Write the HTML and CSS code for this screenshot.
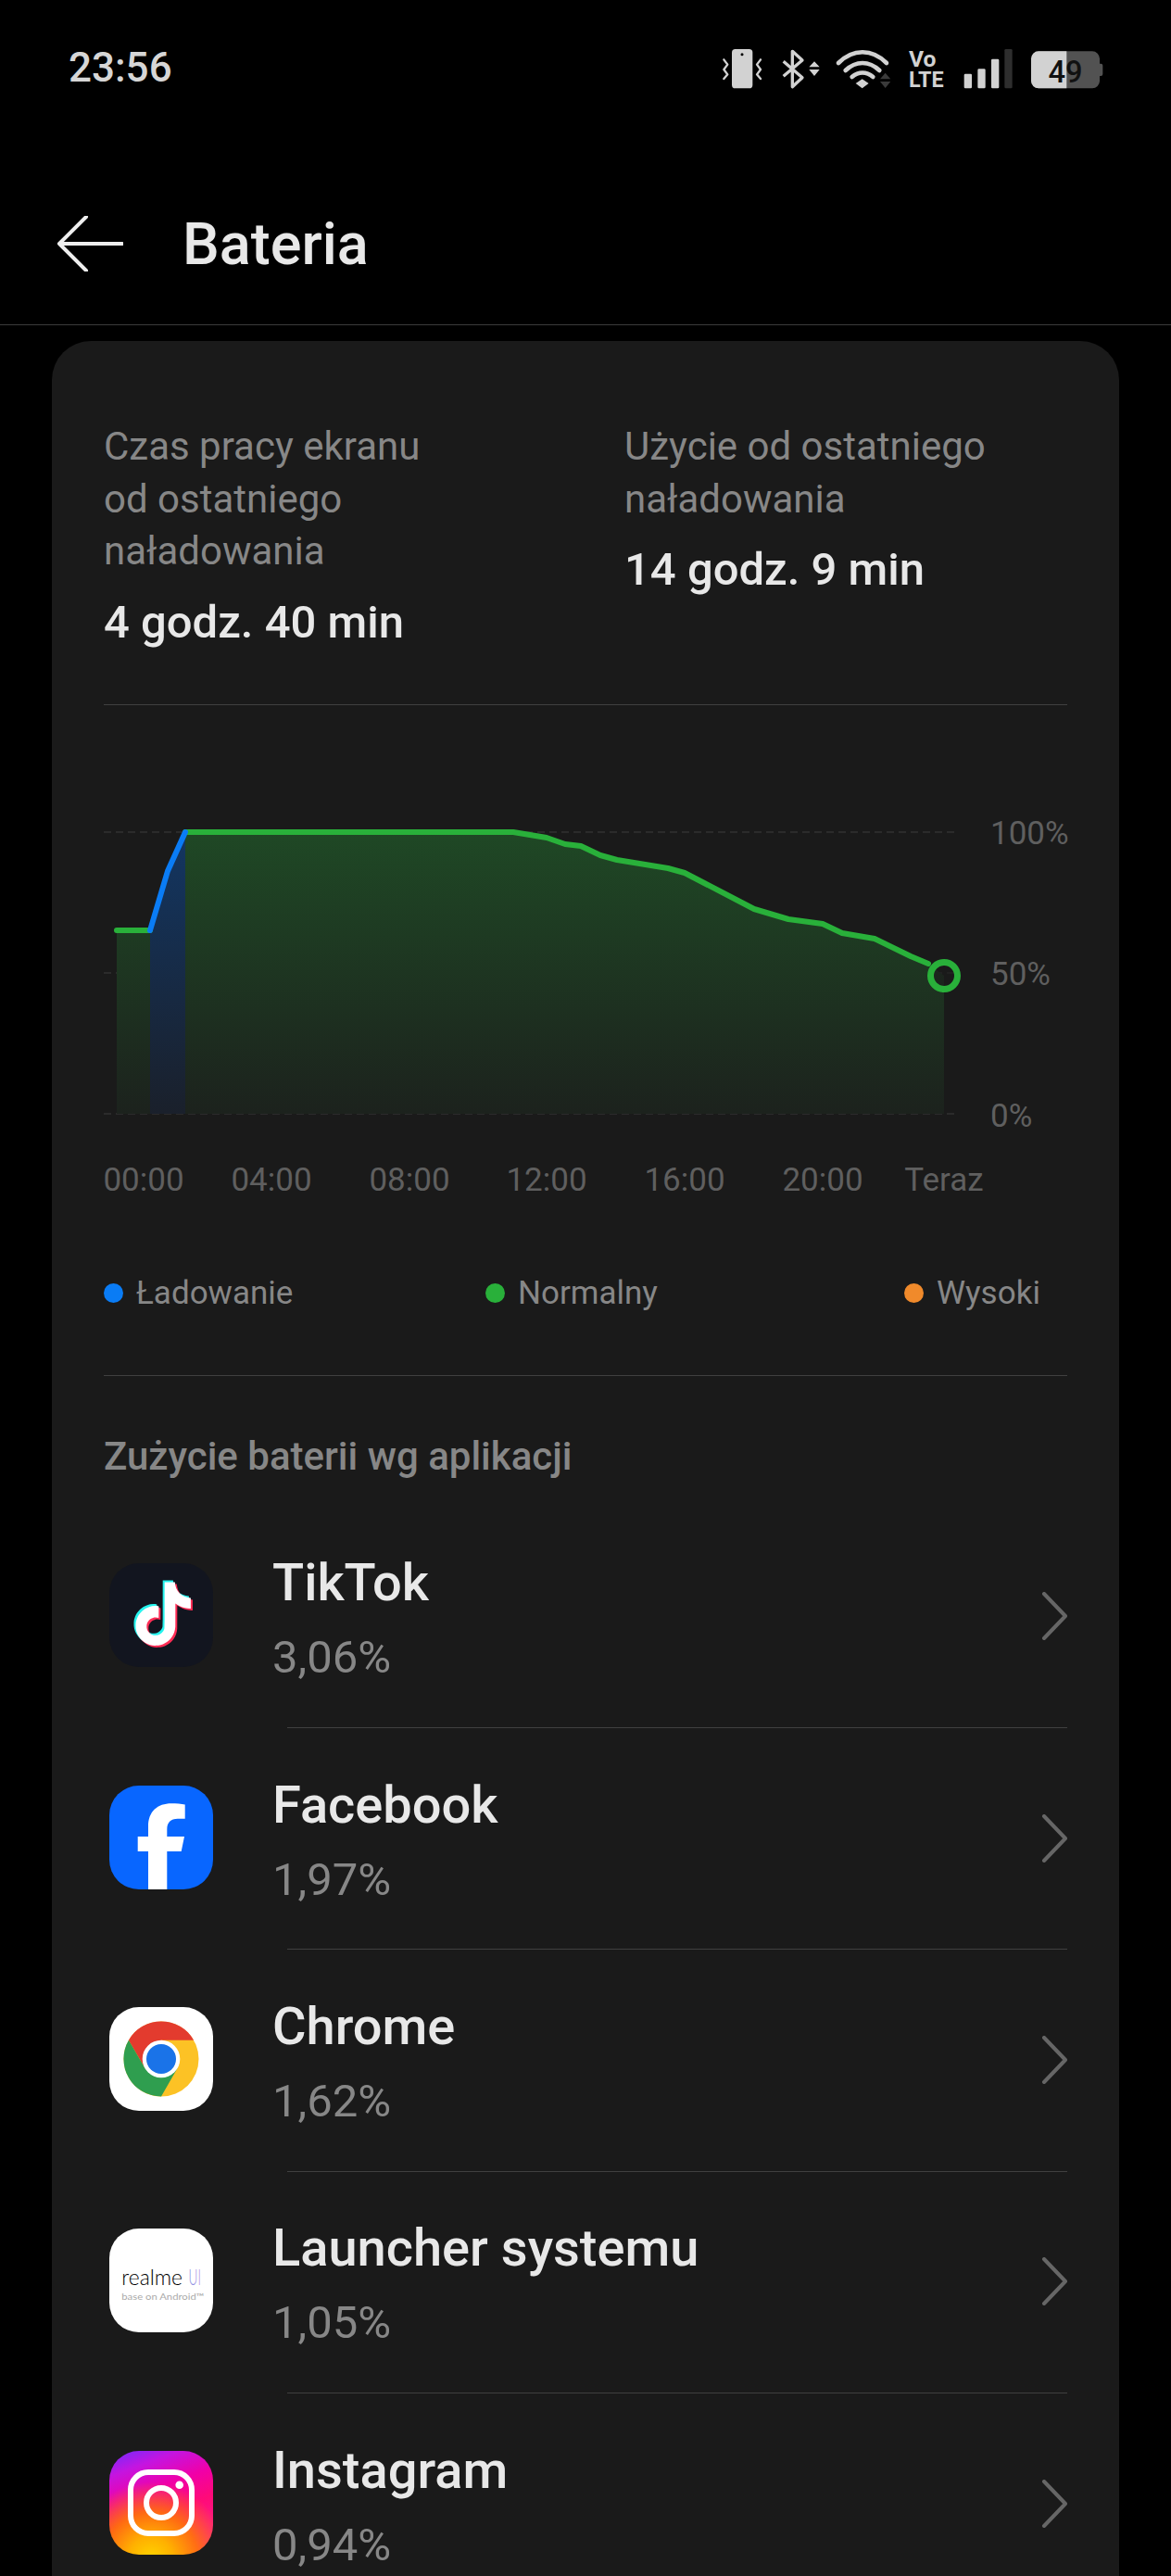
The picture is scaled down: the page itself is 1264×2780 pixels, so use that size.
FILE: index.html
```html
<!DOCTYPE html>
<html lang="pl">
<head>
<meta charset="utf-8">
<title>Bateria</title>
<link rel="stylesheet" href="styles.css">
</head>
<body>
<div class="screen">
  <div class="statusbar">
    <span class="time">23:56</span>
    <div class="status-icons">
      <svg class="si" width="44" height="45" viewBox="118 65 132 135"><rect x="148" y="68" width="67" height="127" rx="11" fill="#d2d2d2"/><circle cx="181" cy="85" r="4.5" fill="#000"/><path class="zig" d="M122 102L134 118 122 134 134 150 122 164M241 102L229 118 241 134 229 150 241 164"/></svg>
      <svg class="si" width="39" height="45" viewBox="310 65 117 135"><path class="bt" d="M315 108L376 160 344 190V75L376 104 315 156"/><path fill="#d2d2d2" d="M415 108L432 126H398ZM398 134H432L415 155Z"/></svg>
      <svg class="si" width="58.3" height="45" viewBox="487 65 175 135"><path class="wf" d="M493 113C540 66 602 66 649 113"/><path class="wf" d="M516 137C550 105 592 105 626 137"/><path class="wf" d="M537 158C558 140 584 140 605 158"/><path fill="#d2d2d2" d="M570 165L591 179 570 195 549 179Z"/><path fill="#3a3a3a" d="M645 145L662 165H628ZM628 173H662L645 194Z"/></svg>
      <svg class="si" width="39.3" height="45" viewBox="722 65 118 135"><text class="vo" x="722" y="125">Vo</text><text class="vo" x="722" y="192" textLength="113" lengthAdjust="spacingAndGlyphs">LTE</text></svg>
      <svg class="si" width="52.7" height="45" viewBox="900 65 158 135"><rect x="902" y="148" width="25" height="47" rx="4" fill="#d2d2d2"/><rect x="946" y="132" width="25" height="63" rx="4" fill="#d2d2d2"/><rect x="990" y="100" width="25" height="95" rx="4" fill="#d2d2d2"/><rect x="1033" y="68" width="25" height="127" rx="4" fill="#2e2e2e"/></svg>
      <svg class="si" width="78" height="45" viewBox="1118 65 234 135"><rect x="1118" y="75" width="222" height="120" rx="24" fill="#525252"/><path fill="#525252" d="M1340 115h4a6 6 0 0 1 6 6v28a6 6 0 0 1-6 6h-4z"/><path fill="#d2d2d2" d="M1233 75H1142a24 24 0 0 0-24 24v72a24 24 0 0 0 24 24h91z"/><text class="batt" x="1229" y="175" text-anchor="middle">49</text></svg>
    </div>
  </div>

  <header class="appbar">
    <svg class="back" width="72" height="60" viewBox="0 0 72 60"><path d="M32 1L3 30 32 59M3 30H71"/></svg>
    <h1 class="title">Bateria</h1>
  </header>

  <main class="card">
    <section class="stats">
      <div class="stat">
        <p class="stat-label">Czas pracy ekranu<br>od ostatniego<br>naładowania</p>
        <p class="stat-value">4 godz. 40 min</p>
      </div>
      <div class="stat">
        <p class="stat-label">Użycie od ostatniego<br>naładowania</p>
        <p class="stat-value">14 godz. 9 min</p>
      </div>
    </section>

    <svg class="chart" width="1152" height="450" viewBox="56 860 1152 450">
      <defs>
        <linearGradient id="gGreen" gradientUnits="userSpaceOnUse" x1="0" y1="898" x2="0" y2="1202"><stop offset="0" stop-color="#1f4825"/><stop offset="1" stop-color="#1c221d"/></linearGradient>
        <linearGradient id="gBlue" gradientUnits="userSpaceOnUse" x1="0" y1="898" x2="0" y2="1202"><stop offset="0" stop-color="#133662"/><stop offset="1" stop-color="#1a202b"/></linearGradient>
      </defs>
      <path class="grid" d="M112 898H1032M112 1050H1032M112 1202H1032"/>
      <path fill="url(#gGreen)" d="M126 1004H162V1202H126Z"/>
      <path fill="url(#gBlue)" d="M162 1004L181 940 200 898V1202H162Z"/>
      <path fill="url(#gGreen)" d="M200 898H554L590 904 610 911 627 913 648 923 666 928 721 937 739 942 814 981 851 992 888 997 909 1007 944 1013 983 1032 1002 1040 1019 1053V1202H200Z"/>
      <path class="line-green" d="M126 1004H162M200 898H554L590 904 610 911 627 913 648 923 666 928 721 937 739 942 814 981 851 992 888 997 909 1007 944 1013 983 1032 1002 1040"/>
      <path class="line-blue" d="M162 1004L181 940 200 898"/>
      <circle class="dot-end" cx="1019" cy="1053" r="14.5"/>
      <text class="axis" x="1069" y="911">100%</text>
      <text class="axis" x="1069" y="1063">50%</text>
      <text class="axis" x="1069" y="1216">0%</text>
      <text class="axis" x="155" y="1285" text-anchor="middle">00:00</text>
      <text class="axis" x="293" y="1285" text-anchor="middle">04:00</text>
      <text class="axis" x="442" y="1285" text-anchor="middle">08:00</text>
      <text class="axis" x="590" y="1285" text-anchor="middle">12:00</text>
      <text class="axis" x="739" y="1285" text-anchor="middle">16:00</text>
      <text class="axis" x="888" y="1285" text-anchor="middle">20:00</text>
      <text class="axis" x="1019" y="1285" text-anchor="middle">Teraz</text>
    </svg>

    <div class="legend">
      <span class="legend-item"><i class="ldot ldot-blue"></i>Ładowanie</span>
      <span class="legend-item"><i class="ldot ldot-green"></i>Normalny</span>
      <span class="legend-item"><i class="ldot ldot-orange"></i>Wysoki</span>
    </div>

    <section class="usage">
      <h2 class="usage-title">Zużycie baterii wg aplikacji</h2>
      <ul class="apps">
        <li class="app">
          <svg class="app-icon" viewBox="0 0 112 112"><rect width="112" height="112" rx="32" fill="#12151f"/>
            <defs><path id="tt" d="M12.525.02c1.31-.02 2.61-.01 3.91-.02.08 1.53.63 3.09 1.75 4.17 1.12 1.11 2.7 1.62 4.24 1.79v4.03c-1.44-.05-2.89-.35-4.2-.97-.57-.26-1.1-.59-1.62-.93-.01 2.92.01 5.84-.02 8.75-.08 1.4-.54 2.79-1.35 3.94-1.31 1.92-3.58 3.17-5.91 3.21-1.43.08-2.86-.31-4.08-1.03-2.02-1.19-3.44-3.37-3.65-5.71-.02-.5-.03-1-.01-1.49.18-1.9 1.12-3.72 2.58-4.96 1.66-1.44 3.98-2.13 6.15-1.72.02 1.48-.04 2.96-.04 4.44-.99-.32-2.15-.23-3.02.37-.63.41-1.11 1.04-1.36 1.75-.21.51-.15 1.07-.14 1.61.24 1.64 1.82 3.02 3.5 2.87 1.12-.01 2.19-.66 2.77-1.61.19-.33.4-.67.41-1.06.1-1.79.06-3.57.07-5.36.01-4.03-.01-8.05.02-12.07z"/></defs>
            <g transform="translate(22 18.5) scale(2.85)"><use href="#tt" class="tt-cyan"/></g>
            <g transform="translate(26 22.5) scale(2.85)"><use href="#tt" class="tt-red"/></g>
            <g transform="translate(24 20.5) scale(2.85)"><use href="#tt" class="tt-white"/></g>
          </svg>
          <div class="app-text"><div class="app-name">TikTok</div><div class="app-pct">3,06%</div></div>
          <svg class="chev" width="28" height="52" viewBox="0 0 28 52"><path d="M3 2L26 26 3 50"/></svg>
        </li>
        <li class="app">
          <svg class="app-icon" viewBox="0 0 112 112"><rect width="112" height="112" rx="32" fill="#0866ff"/><path fill="#fff" d="M42 112V71H30.7V55H42V44C42 28 52 19.3 67 19.3 72 19.3 78 19.7 81.7 20.5V35.7H74C66 35.7 62.3 40 62.3 47V55H81L77.7 71H62.3V112Z"/></svg>
          <div class="app-text"><div class="app-name">Facebook</div><div class="app-pct">1,97%</div></div>
          <svg class="chev" width="28" height="52" viewBox="0 0 28 52"><path d="M3 2L26 26 3 50"/></svg>
        </li>
        <li class="app">
          <svg class="app-icon" viewBox="0 0 112 112"><rect width="112" height="112" rx="32" fill="#fff"/>
            <circle cx="56" cy="56" r="40.5" fill="#fcc225"/>
            <path fill="#e33b2e" d="M20.9 35.7A40.5 40.5 0 0 1 91.1 35.7H56L38.5 66Z"/>
            <path fill="#2f9e4f" d="M20.9 35.7A40.5 40.5 0 0 0 56 96.5L73.5 66H38.5Z"/>
            <circle cx="56" cy="56" r="20.3" fill="#fff"/><circle cx="56" cy="56" r="16" fill="#1a73e8"/></svg>
          <div class="app-text"><div class="app-name">Chrome</div><div class="app-pct">1,62%</div></div>
          <svg class="chev" width="28" height="52" viewBox="0 0 28 52"><path d="M3 2L26 26 3 50"/></svg>
        </li>
        <li class="app">
          <svg class="app-icon" viewBox="0 0 112 112"><defs><linearGradient id="gUi" x1="0" y1="0" x2="1" y2="0"><stop offset="0" stop-color="#7d8fe0"/><stop offset="1" stop-color="#b592e6"/></linearGradient></defs>
            <rect width="112" height="112" rx="32" fill="#fff"/>
            <text class="rm" x="13.3" y="61" textLength="65.7" lengthAdjust="spacingAndGlyphs">realme</text>
            <text class="rm rm-ui" x="85.6" y="61" textLength="13.4" lengthAdjust="spacingAndGlyphs">UI</text>
            <text class="rm-sub" x="13.3" y="76.5" textLength="89" lengthAdjust="spacingAndGlyphs">base on Android™</text></svg>
          <div class="app-text"><div class="app-name">Launcher systemu</div><div class="app-pct">1,05%</div></div>
          <svg class="chev" width="28" height="52" viewBox="0 0 28 52"><path d="M3 2L26 26 3 50"/></svg>
        </li>
        <li class="app">
          <div class="app-icon ig"><svg class="ig-glyph" viewBox="0 0 112 112"><rect x="23" y="23" width="66" height="66" rx="19"/><circle cx="56" cy="56" r="16"/><circle class="ig-dot" cx="75.7" cy="36.7" r="4.3"/></svg></div>
          <div class="app-text"><div class="app-name">Instagram</div><div class="app-pct">0,94%</div></div>
          <svg class="chev" width="28" height="52" viewBox="0 0 28 52"><path d="M3 2L26 26 3 50"/></svg>
        </li>
      </ul>
    </section>
  </main>
</div>
</body>
</html>
```
FILE: styles.css
```css
* { box-sizing: border-box; }
html, body { margin: 0; padding: 0; background: #000; }
body { font-family: Roboto, "Liberation Sans", sans-serif; }
.screen { width: 1264px; height: 2780px; overflow: hidden; background: #000; }

.statusbar { height: 100px; padding: 52px 73px 0 74px; display: flex; justify-content: space-between; align-items: flex-start; }
.time { margin-top: 1px; font-size: 44px; font-weight: 500; line-height: 40px; color: #d6d6d6; }
.status-icons { display: flex; gap: 20px; }
.si { display: block; overflow: visible; }
.zig { fill: none; stroke: #d2d2d2; stroke-width: 7; stroke-linejoin: round; stroke-linecap: round; }
.bt { fill: none; stroke: #d2d2d2; stroke-width: 10; stroke-linejoin: round; }
.wf { fill: none; stroke: #d2d2d2; stroke-width: 14; stroke-linecap: round; }
.vo { font-family: Roboto, sans-serif; font-weight: 700; font-size: 74px; fill: #d2d2d2; }
.batt { font-family: Roboto, sans-serif; font-weight: 500; font-size: 98px; fill: #111; }

.appbar { height: 251px; padding: 133px 0 0 61px; display: flex; align-items: flex-start; border-bottom: 1px solid #3b3b3b; }
.back { display: block; flex: none; }
.back path { fill: none; stroke: #eee; stroke-width: 4; stroke-linecap: round; stroke-linejoin: round; }
.title { margin: 1px 0 0 64px; font-size: 63px; line-height: 60px; font-weight: 500; color: #e8e8e8; }

.card { margin: 17px 56px 0; background: #1a1a1a; border-radius: 42px 42px 0 0; padding: 0 56px; height: 2500px; }

.stats { display: grid; grid-template-columns: 562px 1fr; height: 393px; padding-top: 86px; border-bottom: 1px solid #404040; }
.stat-label { margin: 0; font-size: 42px; line-height: 56.5px; color: #878787; }
.stat-value { margin: 20px 0 0; font-size: 49px; line-height: 56px; font-weight: 500; color: #e8e8e8; }

.chart { display: block; margin: 99px 0 0 -56px; }
.grid { fill: none; stroke: #2b2b2b; stroke-width: 2; stroke-dasharray: 8 5; }
.line-green { fill: none; stroke: #29b03a; stroke-width: 6; stroke-linecap: round; stroke-linejoin: round; }
.line-blue { fill: none; stroke: #0a7cf5; stroke-width: 6; stroke-linecap: round; stroke-linejoin: round; }
.dot-end { fill: #1a1a1a; stroke: #29b03a; stroke-width: 7; fill-opacity: .6; }
.axis { font-family: Roboto, sans-serif; font-size: 35px; fill: #5f5f5f; }

.legend { display: grid; grid-template-columns: 412px 452px auto; height: 175px; padding-top: 65px; border-bottom: 1px solid #404040; }
.legend-item { display: flex; align-items: center; height: 40px; font-size: 35px; color: #878787; }
.ldot { width: 21px; height: 21px; border-radius: 50%; margin-right: 14px; flex: none; }
.ldot-blue { background: #0a7cf5; }
.ldot-green { background: #29b03a; }
.ldot-orange { background: #f08a2b; }

.usage-title { margin: 0; padding-top: 64px; height: 139.5px; font-size: 42px; line-height: 46px; font-weight: 500; color: #878787; }
.apps { list-style: none; margin: 0; padding: 0; }
.app { position: relative; height: 239.4px; display: flex; align-items: center; padding-left: 6px; }
.app::after { content: ""; position: absolute; left: 198px; right: 0; bottom: -1px; height: 1px; background: #404040; }
.app-icon { width: 112px; height: 112px; flex: none; display: block; margin-bottom: 2px; }
.app-text { margin-left: 64px; flex: 1; padding-top: 5px; }
.app-name { font-size: 56px; line-height: 64px; font-weight: 500; color: #e8e8e8; }
.app-pct { margin-top: 21px; font-size: 49px; line-height: 56px; color: #878787; }
.chev { flex: none; display: block; }
.chev path { fill: none; stroke: #666; stroke-width: 4; stroke-linecap: round; stroke-linejoin: round; }

.tt-cyan { fill: #25f4ee; }
.tt-red { fill: #fe2c55; }
.tt-white { fill: #fff; }
.rm { font-family: Lato, sans-serif; font-size: 24px; font-weight: 300; fill: #000; }
.rm-ui { fill: url(#gUi); }
.rm-sub { font-family: Lato, sans-serif; font-size: 10px; fill: #aaa; }

.ig { border-radius: 32px; background:
  radial-gradient(circle at 40% 105%, #ffd600 0, #ffb000 18%, rgba(255,122,0,.85) 38%, rgba(255,80,60,0) 62%),
  linear-gradient(160deg, #6d2cff 0, #c415e0 18%, #f000a8 38%, #ff0a78 58%, #ff2a90 100%); }
.ig-glyph { display: block; width: 112px; height: 112px; fill: none; stroke: #fff; stroke-width: 6; }
.ig-dot { fill: #fff; stroke: none; }
```
